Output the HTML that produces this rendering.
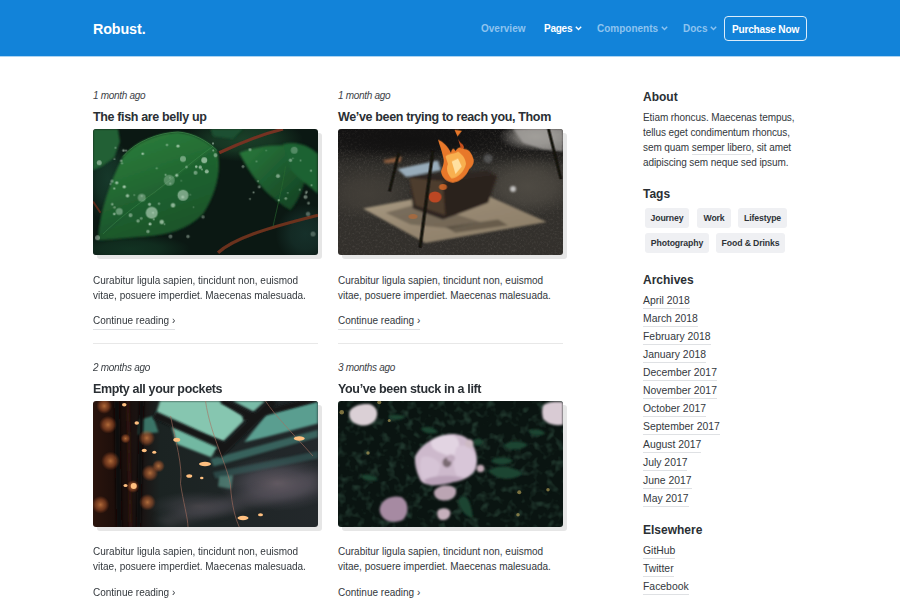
<!DOCTYPE html>
<html><head><meta charset="utf-8">
<style>
*{margin:0;padding:0;box-sizing:border-box}
html,body{width:900px;height:600px;overflow:hidden;background:#fff}
body{font-family:"Liberation Sans",sans-serif;color:#3a3f45;position:relative}
.nav{position:absolute;left:0;top:0;width:900px;height:56px;background:#1283d9;box-shadow:0 1px 0 rgba(18,131,217,.35)}
.brand{position:absolute;left:93px;top:18.5px;font-size:14.3px;letter-spacing:-0.1px;font-weight:bold;color:#fff;line-height:20px}
.nl{position:absolute;top:21.5px;font-size:10px;font-weight:bold;line-height:14px;color:#8ec3ef;white-space:nowrap}
.nl.act{color:#fff}
.chev{display:inline-block;margin-left:2.5px;vertical-align:middle;position:relative;top:-0.5px}
.btn{position:absolute;left:724px;top:16px;width:83px;height:25px;border:1px solid #fff;border-radius:4px;color:#fff;font-size:10.1px;letter-spacing:-0.2px;font-weight:bold;line-height:25.5px;border-color:rgba(255,255,255,.85);text-align:center}
.t{position:absolute;white-space:nowrap}
.date{font-size:10px;letter-spacing:-0.3px;font-style:italic;color:#3d4247;line-height:12px}
.title{font-size:12.5px;font-weight:bold;color:#2a2f34;line-height:14px;letter-spacing:-0.35px}
.para{font-size:10px;color:#33383d;line-height:15px}
.more{font-size:10px;color:#33383d;line-height:12px;border-bottom:1px solid #dfe1e4;padding-bottom:2px}
.hr{position:absolute;height:1px;background:#e8e8e8}
.img{position:absolute;width:225px;height:126px;border-radius:3px;box-shadow:4px 4px 0 #e6e6e6;overflow:hidden}
.img svg{display:block}
.h{font-size:12px;font-weight:bold;color:#2a2f34;line-height:14px}
.side{font-size:10px;letter-spacing:-0.08px;color:#33383d;line-height:15.25px}
.ul{border-bottom:1px solid #dfe1e4;padding-bottom:1px}
.badge{position:absolute;height:19.5px;background:#eff0f3;border-radius:3px;font-size:8.7px;letter-spacing:-0.12px;font-weight:bold;color:#2e3338;line-height:21px;text-align:center}
.arch{font-size:10.4px;color:#33383d;line-height:14px;border-bottom:1px solid #dfe1e4;padding-bottom:0}
</style></head><body>
<div class="nav">
  <div class="brand">Robust.</div>
  <div class="nl" style="left:481px">Overview</div>
  <div class="nl act" style="left:544px;letter-spacing:-0.25px">Pages<svg class="chev" width="7" height="5" viewBox="0 0 7 5"><polyline points="0.8,0.8 3.5,3.6 6.2,0.8" fill="none" stroke="currentColor" stroke-width="1.4"/></svg></div>
  <div class="nl" style="left:597px">Components<svg class="chev" width="7" height="5" viewBox="0 0 7 5"><polyline points="0.8,0.8 3.5,3.6 6.2,0.8" fill="none" stroke="currentColor" stroke-width="1.4"/></svg></div>
  <div class="nl" style="left:683px">Docs<svg class="chev" width="7" height="5" viewBox="0 0 7 5"><polyline points="0.8,0.8 3.5,3.6 6.2,0.8" fill="none" stroke="currentColor" stroke-width="1.4"/></svg></div>
  <div class="btn">Purchase Now</div>
</div>

<!-- row 1 -->
<div class="t date" style="left:93px;top:90px">1 month ago</div>
<div class="t title" style="left:93px;top:109.6px">The fish are belly up</div>
<div class="img" style="left:93px;top:129px" id="img1"><svg width="225" height="126" viewBox="0 0 900 504" preserveAspectRatio="none">
<defs>
<filter id="b1" filterUnits="userSpaceOnUse" x="-100" y="-100" width="1100" height="704"><feGaussianBlur stdDeviation="5"/></filter>
<filter id="b1s" filterUnits="userSpaceOnUse" x="-100" y="-100" width="1100" height="704"><feGaussianBlur stdDeviation="2"/></filter>
<filter id="b1l" filterUnits="userSpaceOnUse" x="-100" y="-100" width="1100" height="704"><feGaussianBlur stdDeviation="25"/></filter>
<linearGradient id="lf1" x1="0.2" y1="0" x2="0.6" y2="1"><stop offset="0" stop-color="#2c7e3d"/><stop offset="0.45" stop-color="#236a32"/><stop offset="1" stop-color="#164628"/></linearGradient>
<linearGradient id="lf2" x1="0" y1="0" x2="1" y2="1"><stop offset="0" stop-color="#2a7a3c"/><stop offset="1" stop-color="#123e22"/></linearGradient>
<radialGradient id="rg1_0"><stop offset="0" stop-color="#1a3f28" stop-opacity="1"/><stop offset="0.5" stop-color="#1a3f28" stop-opacity="0.75"/><stop offset="1" stop-color="#1a3f28" stop-opacity="0"/></radialGradient><radialGradient id="rg1_1"><stop offset="0" stop-color="#16382a" stop-opacity="1"/><stop offset="0.5" stop-color="#16382a" stop-opacity="0.75"/><stop offset="1" stop-color="#16382a" stop-opacity="0"/></radialGradient><radialGradient id="rg1_2"><stop offset="0" stop-color="#16302a" stop-opacity="1"/><stop offset="0.5" stop-color="#16302a" stop-opacity="0.75"/><stop offset="1" stop-color="#16302a" stop-opacity="0"/></radialGradient><radialGradient id="rg1_3"><stop offset="0" stop-color="#123222" stop-opacity="1"/><stop offset="0.5" stop-color="#123222" stop-opacity="0.75"/><stop offset="1" stop-color="#123222" stop-opacity="0"/></radialGradient></defs>
<rect width="900" height="504" fill="#0b1813"/>
<g><ellipse cx="600" cy="40" rx="240" ry="90" fill="url(#rg1_0)"/><ellipse cx="60" cy="200" rx="90" ry="180" fill="url(#rg1_1)"/><ellipse cx="850" cy="420" rx="120" ry="120" fill="url(#rg1_2)"/><ellipse cx="150" cy="480" rx="240" ry="60" fill="url(#rg1_3)"/></g>
<g filter="url(#b1)">
<path d="M0 0 L100 0 L108 50 L85 115 L35 150 L0 165 Z" fill="#226034"/>
<path d="M20 445 C25 330 70 210 120 110 C170 50 260 15 340 12 C400 15 460 50 495 85 C515 150 500 250 440 340 C380 400 300 425 210 430 C140 435 70 445 20 445 Z" fill="url(#lf1)"/>
<path d="M40 430 C120 360 250 260 480 75 C505 150 495 250 440 340 C380 400 300 425 210 430 C140 435 80 440 40 430 Z" fill="#1e5e2e" opacity="0.55"/>
<path d="M585 95 C650 70 740 55 820 72 C870 120 860 240 790 325 C730 290 650 230 585 95 Z" fill="url(#lf2)"/>
<path d="M760 60 C820 45 870 70 900 100 L900 260 C870 230 820 200 790 160 Z" fill="#1f6232"/>
<path d="M470 0 L600 0 L560 40 L480 30 Z" fill="#1b4f30"/>

</g>
<g filter="url(#b1s)">
<path d="M505 95 C580 60 660 25 760 0" stroke="#743222" stroke-width="13" fill="none"/>
<path d="M500 495 C560 440 680 400 900 345" stroke="#6a301f" stroke-width="13" fill="none"/>
<path d="M0 290 L30 335" stroke="#5a2a1c" stroke-width="8" fill="none"/>
<path d="M480 70 C420 110 340 180 250 250 C180 300 100 360 40 420" stroke="#4a9a58" stroke-width="3" fill="none" opacity="0.5"/>
<path d="M770 150 C760 220 740 300 720 390" stroke="#2a6a30" stroke-width="4" fill="none" opacity="0.6"/>
<path d="M120 110 C170 50 260 15 340 12 C400 15 460 50 495 85" stroke="#58b060" stroke-width="3" fill="none" opacity="0.6"/>
</g>
<g fill="#d5ecd9" filter="url(#b1s)">
<circle cx="360" cy="120" r="12" opacity="0.45"/>
<circle cx="445" cy="125" r="12" opacity="0.6"/>
<circle cx="305" cy="205" r="22" opacity="0.3"/>
<circle cx="360" cy="265" r="22" opacity="0.5"/>
<circle cx="235" cy="335" r="24" opacity="0.55"/>
<circle cx="195" cy="275" r="16" opacity="0.35"/>
<circle cx="105" cy="330" r="14" opacity="0.4"/>
<circle cx="275" cy="372" r="9" opacity="0.6"/>
<circle cx="320" cy="305" r="9" opacity="0.6"/>
<circle cx="455" cy="170" r="8" opacity="0.6"/>
<circle cx="410" cy="175" r="8" opacity="0.45"/>
<circle cx="25" cy="135" r="10" opacity="0.5"/>
<circle cx="18" cy="435" r="10" opacity="0.45"/>
<circle cx="740" cy="188" r="8" opacity="0.5"/>
<circle cx="805" cy="85" r="14" opacity="0.3"/>
<circle cx="850" cy="272" r="8" opacity="0.45"/>
<circle cx="380" cy="430" r="7" opacity="0.4"/>
<circle cx="310" cy="430" r="8" opacity="0.35"/>
<circle cx="440" cy="352" r="7" opacity="0.35"/>
<circle cx="490" cy="105" r="8" opacity="0.45"/>
<circle cx="860" cy="340" r="9" opacity="0.35"/>
<circle cx="220" cy="410" r="7" opacity="0.45"/>
<circle cx="180" cy="368" r="7" opacity="0.45"/>
<circle cx="150" cy="345" r="8" opacity="0.45"/>
<circle cx="600" cy="150" r="6" opacity="0.4"/>
<circle cx="790" cy="125" r="7" opacity="0.45"/>
<circle cx="880" cy="420" r="10" opacity="0.3"/><circle cx="199" cy="99" r="5.2" opacity="0.66"/><circle cx="340" cy="68" r="6.3" opacity="0.65"/><circle cx="290" cy="183" r="4.1" opacity="0.50"/><circle cx="85" cy="238" r="4.4" opacity="0.66"/><circle cx="76" cy="209" r="6.8" opacity="0.40"/><circle cx="90" cy="75" r="3.7" opacity="0.43"/><circle cx="243" cy="362" r="3.9" opacity="0.52"/><circle cx="113" cy="127" r="5.4" opacity="0.44"/><circle cx="308" cy="195" r="3.0" opacity="0.50"/><circle cx="480" cy="58" r="4.5" opacity="0.55"/><circle cx="429" cy="153" r="6.8" opacity="0.59"/><circle cx="122" cy="86" r="5.1" opacity="0.57"/><circle cx="193" cy="358" r="5.7" opacity="0.37"/><circle cx="138" cy="267" r="6.6" opacity="0.62"/><circle cx="335" cy="185" r="6.5" opacity="0.63"/><circle cx="296" cy="64" r="4.6" opacity="0.49"/><circle cx="86" cy="120" r="3.4" opacity="0.57"/><circle cx="353" cy="207" r="3.2" opacity="0.37"/><circle cx="195" cy="268" r="3.8" opacity="0.41"/><circle cx="255" cy="157" r="4.4" opacity="0.37"/><circle cx="402" cy="313" r="3.0" opacity="0.40"/><circle cx="165" cy="264" r="3.4" opacity="0.48"/><circle cx="286" cy="381" r="3.1" opacity="0.66"/><circle cx="374" cy="152" r="5.5" opacity="0.40"/><circle cx="481" cy="86" r="4.0" opacity="0.47"/><circle cx="240" cy="335" r="4.5" opacity="0.39"/><circle cx="125" cy="231" r="6.4" opacity="0.70"/><circle cx="77" cy="301" r="4.9" opacity="0.52"/><circle cx="389" cy="263" r="3.3" opacity="0.39"/><circle cx="436" cy="162" r="4.4" opacity="0.44"/><circle cx="359" cy="272" r="6.3" opacity="0.41"/><circle cx="309" cy="218" r="3.1" opacity="0.68"/><circle cx="264" cy="299" r="5.1" opacity="0.40"/><circle cx="86" cy="314" r="5.2" opacity="0.36"/><circle cx="413" cy="151" r="5.1" opacity="0.69"/><circle cx="226" cy="301" r="6.5" opacity="0.59"/><circle cx="70" cy="220" r="4.0" opacity="0.48"/><circle cx="132" cy="86" r="3.7" opacity="0.62"/><circle cx="85" cy="340" r="5.1" opacity="0.62"/><circle cx="116" cy="137" r="4.3" opacity="0.43"/><circle cx="228" cy="380" r="6.2" opacity="0.69"/><circle cx="95" cy="215" r="6.4" opacity="0.63"/><circle cx="827" cy="243" r="3.7" opacity="0.46"/><circle cx="693" cy="86" r="3.1" opacity="0.38"/><circle cx="665" cy="232" r="5.9" opacity="0.43"/><circle cx="862" cy="297" r="5.9" opacity="0.41"/><circle cx="654" cy="130" r="3.6" opacity="0.36"/><circle cx="771" cy="278" r="5.5" opacity="0.44"/><circle cx="779" cy="256" r="3.3" opacity="0.50"/><circle cx="854" cy="252" r="5.3" opacity="0.44"/><circle cx="642" cy="254" r="4.0" opacity="0.54"/><circle cx="872" cy="167" r="4.2" opacity="0.58"/><circle cx="800" cy="117" r="3.4" opacity="0.35"/><circle cx="852" cy="257" r="3.4" opacity="0.55"/><circle cx="874" cy="225" r="4.1" opacity="0.46"/><circle cx="628" cy="83" r="5.9" opacity="0.49"/><circle cx="743" cy="285" r="4.3" opacity="0.56"/><circle cx="830" cy="126" r="3.8" opacity="0.39"/><circle cx="660" cy="209" r="3.8" opacity="0.43"/><circle cx="628" cy="280" r="4.1" opacity="0.44"/>
</g>
</svg></div>
<div class="t para" style="left:93px;top:272.5px">Curabitur ligula sapien, tincidunt non, euismod<br>vitae, posuere imperdiet. Maecenas malesuada.</div>
<div class="t more" style="left:93px;top:314.5px">Continue reading ›</div>
<div class="hr" style="left:93px;top:343px;width:225px"></div>

<div class="t date" style="left:338px;top:90px">1 month ago</div>
<div class="t title" style="left:338px;top:109.6px">We’ve been trying to reach you, Thom</div>
<div class="img" style="left:338px;top:129px" id="img2"><svg width="225" height="126" viewBox="0 0 900 504" preserveAspectRatio="none">
<defs>
<filter id="b2" filterUnits="userSpaceOnUse" x="-100" y="-100" width="1100" height="704"><feGaussianBlur stdDeviation="4"/></filter>
<filter id="b2s" filterUnits="userSpaceOnUse" x="-100" y="-100" width="1100" height="704"><feGaussianBlur stdDeviation="2"/></filter>
<filter id="b2l" filterUnits="userSpaceOnUse" x="-100" y="-100" width="1100" height="704"><feGaussianBlur stdDeviation="30"/></filter>
<filter id="b2n"><feTurbulence type="fractalNoise" baseFrequency="0.12" numOctaves="3" seed="5"/><feColorMatrix values="0 0 0 0 0.1  0 0 0 0 0.09  0 0 0 0 0.08  0 0 0 -2.2 1.2"/></filter>
<linearGradient id="g2" x1="0" y1="0" x2="0" y2="1"><stop offset="0" stop-color="#131212"/><stop offset="0.16" stop-color="#1a1918"/><stop offset="0.3" stop-color="#32302c"/><stop offset="1" stop-color="#33302c"/></linearGradient>
<linearGradient id="mat" x1="0" y1="0" x2="1" y2="1"><stop offset="0" stop-color="#a89a82"/><stop offset="0.5" stop-color="#958670"/><stop offset="1" stop-color="#8a7c66"/></linearGradient>
<radialGradient id="fl" cx="0.5" cy="0.6" r="0.6"><stop offset="0" stop-color="#ffe0a0"/><stop offset="0.5" stop-color="#f6a040"/><stop offset="1" stop-color="#d0561e"/></radialGradient>
<radialGradient id="rg2_0"><stop offset="0" stop-color="#8a8782" stop-opacity="1"/><stop offset="0.5" stop-color="#8a8782" stop-opacity="0.75"/><stop offset="1" stop-color="#8a8782" stop-opacity="0"/></radialGradient><radialGradient id="rg2_1"><stop offset="0" stop-color="#4e4a43" stop-opacity="1"/><stop offset="0.5" stop-color="#4e4a43" stop-opacity="0.75"/><stop offset="1" stop-color="#4e4a43" stop-opacity="0"/></radialGradient><radialGradient id="rg2_2"><stop offset="0" stop-color="#423e38" stop-opacity="1"/><stop offset="0.5" stop-color="#423e38" stop-opacity="0.75"/><stop offset="1" stop-color="#423e38" stop-opacity="0"/></radialGradient><radialGradient id="rg2_3"><stop offset="0" stop-color="#121111" stop-opacity="1"/><stop offset="0.5" stop-color="#121111" stop-opacity="0.75"/><stop offset="1" stop-color="#121111" stop-opacity="0"/></radialGradient></defs>
<rect width="900" height="504" fill="url(#g2)"/>
<rect width="900" height="504" filter="url(#b2n)" opacity="0.45"/>
<g><ellipse cx="790" cy="30" rx="150" ry="60" fill="url(#rg2_0)"/><ellipse cx="760" cy="230" rx="210" ry="120" fill="url(#rg2_1)"/><ellipse cx="120" cy="260" rx="180" ry="105" fill="url(#rg2_2)"/><ellipse cx="300" cy="40" rx="390" ry="75" fill="url(#rg2_3)"/></g>
<g filter="url(#b2)">
<path d="M700 0 L900 0 L900 90 L820 82 L740 55 Z" fill="#a8a5a2" opacity="0.75"/>
<path d="M100 318 L290 282 L610 272 L835 372 L350 456 Z" fill="url(#mat)"/>
<path d="M190 335 L300 305 L420 325 L570 372 L450 398 L290 382 Z" fill="#5a5044" opacity="0.55"/>
<path d="M430 392 L640 362 L680 385 L470 415 Z" fill="#3e352c" opacity="0.5"/>
<path d="M285 185 L600 168 L636 190 L600 295 L420 362 L300 318 Z" fill="#2e2520"/>
<path d="M285 195 L440 210 L430 345 L310 305 Z" fill="#4e3c2e"/>
<path d="M420 215 L630 185 L600 290 L430 355 Z" fill="#2a201b"/>
<path d="M238 160 L400 126 L412 165 L272 192 Z" fill="#98acba"/>
<circle cx="700" cy="240" r="12" fill="#e0e0e0" opacity="0.8"/>
<circle cx="600" cy="118" r="18" fill="#7a7c80" opacity="0.5"/>
<path d="M180 125 L255 110 L250 132 L190 137 Z" fill="#a86c44" opacity="0.8"/>
</g>
<g filter="url(#b2s)">
<path d="M400 42 C420 50 440 70 452 95 C455 80 462 72 470 88 C478 72 495 68 505 80 C520 78 535 95 540 115 C548 130 540 150 525 160 C512 190 490 210 460 215 C435 212 415 195 412 170 C418 150 428 135 420 110 C415 85 405 62 400 42 Z" fill="#e8782a"/>
<path d="M430 110 C445 95 470 100 480 90 C495 100 510 115 512 140 C505 170 480 195 455 198 C440 185 430 160 440 140 Z" fill="#f8b050"/>
<path d="M455 130 L480 118 L495 150 L470 180 Z" fill="#ffe0a0"/>
<path d="M466 3 L496 7 L478 30 Z" fill="#e8782a"/>
<path d="M480 40 C490 60 500 55 505 75 L492 78 Z" fill="#c8501c"/>
<ellipse cx="388" cy="272" rx="26" ry="22" fill="#d84a22" opacity="0.8"/>
<ellipse cx="420" cy="232" rx="16" ry="12" fill="#ea7028" opacity="0.75"/>
<ellipse cx="300" cy="350" rx="18" ry="10" fill="#c06a30" opacity="0.6"/>
</g>
<g stroke="#141211" fill="none" filter="url(#b2s)">
<path d="M380 85 L328 475" stroke-width="13"/>
<path d="M243 95 L206 250" stroke-width="12"/>
<path d="M842 0 L892 200" stroke-width="12"/>
</g>
</svg></div>
<div class="t para" style="left:338px;top:272.5px">Curabitur ligula sapien, tincidunt non, euismod<br>vitae, posuere imperdiet. Maecenas malesuada.</div>
<div class="t more" style="left:338px;top:314.5px">Continue reading ›</div>
<div class="hr" style="left:338px;top:343px;width:225px"></div>

<!-- row 2 -->
<div class="t date" style="left:93px;top:362px">2 months ago</div>
<div class="t title" style="left:93px;top:381.6px">Empty all your pockets</div>
<div class="img" style="left:93px;top:401px" id="img3"><svg width="225" height="126" viewBox="0 0 900 504" preserveAspectRatio="none">
<defs>
<filter id="b3" filterUnits="userSpaceOnUse" x="-100" y="-100" width="1100" height="704"><feGaussianBlur stdDeviation="5"/></filter>
<filter id="b3s" filterUnits="userSpaceOnUse" x="-100" y="-100" width="1100" height="704"><feGaussianBlur stdDeviation="2.5"/></filter>
<filter id="b3k" filterUnits="userSpaceOnUse" x="-100" y="-100" width="1100" height="704"><feGaussianBlur stdDeviation="14"/></filter>
<linearGradient id="g3" x1="0" y1="0" x2="1" y2="0"><stop offset="0" stop-color="#2a140d"/><stop offset="0.12" stop-color="#1a0d0a"/><stop offset="0.22" stop-color="#1a1413"/><stop offset="0.3" stop-color="#1b2322"/><stop offset="1" stop-color="#23282b"/></linearGradient>
<radialGradient id="haze3"><stop offset="0" stop-color="#6a6068" stop-opacity="0.9"/><stop offset="0.5" stop-color="#5a5560" stop-opacity="0.6"/><stop offset="1" stop-color="#4a4850" stop-opacity="0"/></radialGradient>
<radialGradient id="glow3"><stop offset="0" stop-color="#e08848" stop-opacity="0.75"/><stop offset="0.6" stop-color="#c06030" stop-opacity="0.45"/><stop offset="1" stop-color="#a04820" stop-opacity="0"/></radialGradient>
</defs>
<rect width="900" height="504" fill="url(#g3)"/>
<ellipse cx="740" cy="330" rx="240" ry="110" fill="url(#haze3)"/><path d="M250 470 L900 280 L900 360 L300 504 Z" fill="#5e5862" opacity="0.35" filter="url(#b3k)"/>
<ellipse cx="420" cy="420" rx="200" ry="60" fill="url(#haze3)" opacity="0.5"/>
<g filter="url(#b3)">
<path d="M268 0 L505 0 L612 70 L522 160 L300 88 L250 58 Z" fill="#86c6b0"/>
<path d="M560 0 L688 0 L642 42 Z" fill="#79bca8"/>
<path d="M695 52 L900 0 L900 90 L700 142 L605 165 Z" fill="#5a9e90"/>
<path d="M315 100 L508 168 L472 225 L335 172 Z" fill="#72b8a2"/>
<path d="M470 232 L900 115 L900 145 L482 262 Z" fill="#4a8a80" opacity="0.6"/>
<path d="M185 75 L240 60 L262 125 L180 135 Z" fill="#4a9a88" opacity="0.7"/>
<path d="M505 300 L560 298 L552 352 L500 342 Z" fill="#6ab0a0" opacity="0.55"/>
<path d="M480 285 L900 200 L900 230 L490 310 Z" fill="#3a6a66" opacity="0.5"/>
</g>
<g stroke="#141919" fill="none" filter="url(#b3)">
<path d="M245 55 L525 182" stroke-width="30"/>
<path d="M725 0 L500 215" stroke-width="32"/>
<path d="M515 0 L640 62" stroke-width="20"/>
<path d="M600 70 L900 -10" stroke-width="22"/>
</g>
<g stroke="#0e0808" fill="none" filter="url(#b3)">
<path d="M195 0 L182 504" stroke-width="18"/>
<path d="M95 0 L105 504" stroke-width="22"/>
<path d="M140 0 L150 504" stroke-width="8" stroke="#3a1a10"/>
</g>
<g stroke="#a87060" fill="none" stroke-width="3" filter="url(#b3s)" opacity="0.8">
<path d="M310 60 C330 160 360 260 350 330 C360 400 380 470 380 504"/>
<path d="M450 0 C470 140 540 260 550 340 C555 420 570 470 585 504"/>
<path d="M690 0 C730 60 790 120 880 220"/>
</g>
<g fill="url(#glow3)">
<circle cx="45" cy="20" r="32"/>
<circle cx="60" cy="95" r="36"/>
<circle cx="215" cy="148" r="34"/>
<circle cx="70" cy="240" r="38"/>
<circle cx="228" cy="288" r="34"/>
<circle cx="262" cy="260" r="26"/>
<circle cx="30" cy="415" r="36"/>
<circle cx="218" cy="405" r="34"/>
<circle cx="130" cy="150" r="20"/>
<circle cx="160" cy="342" r="26"/>
</g>
<g fill="#ffc080" filter="url(#b3s)">
<ellipse cx="125" cy="15" rx="9" ry="7"/>
<ellipse cx="175" cy="88" rx="9" ry="7"/>
<ellipse cx="205" cy="198" rx="10" ry="7"/>
<ellipse cx="245" cy="205" rx="8" ry="6"/>
<ellipse cx="163" cy="340" rx="12" ry="12"/>
<ellipse cx="130" cy="338" rx="8" ry="6"/>
<ellipse cx="335" cy="155" rx="14" ry="8"/>
<ellipse cx="448" cy="252" rx="24" ry="9"/>
<ellipse cx="385" cy="300" rx="12" ry="7"/>
<ellipse cx="825" cy="150" rx="22" ry="9"/>
<ellipse cx="600" cy="468" rx="22" ry="9"/>
<ellipse cx="670" cy="455" rx="10" ry="6"/>
<ellipse cx="435" cy="308" rx="7" ry="5"/>
</g>
</svg></div>
<div class="t para" style="left:93px;top:544.4px">Curabitur ligula sapien, tincidunt non, euismod<br>vitae, posuere imperdiet. Maecenas malesuada.</div>
<div class="t more" style="left:93px;top:586.5px">Continue reading ›</div>

<div class="t date" style="left:338px;top:362px">3 months ago</div>
<div class="t title" style="left:338px;top:381.6px">You’ve been stuck in a lift</div>
<div class="img" style="left:338px;top:401px" id="img4"><svg width="225" height="126" viewBox="0 0 900 504" preserveAspectRatio="none">
<defs>
<filter id="b4" filterUnits="userSpaceOnUse" x="-100" y="-100" width="1100" height="704"><feGaussianBlur stdDeviation="4"/></filter>
<filter id="b4s" filterUnits="userSpaceOnUse" x="-100" y="-100" width="1100" height="704"><feGaussianBlur stdDeviation="2"/></filter>
<filter id="b4l" filterUnits="userSpaceOnUse" x="-100" y="-100" width="1100" height="704"><feGaussianBlur stdDeviation="30"/></filter>
<filter id="b4n" x="0" y="0" width="100%" height="100%"><feTurbulence type="fractalNoise" baseFrequency="0.03" numOctaves="2" seed="11"/><feColorMatrix values="0 0 0 0 0.08  0 0 0 0 0.22  0 0 0 0 0.14  0 0 0 3 -1.45"/><feGaussianBlur stdDeviation="3"/></filter>
<radialGradient id="rose" cx="0.5" cy="0.45" r="0.55"><stop offset="0" stop-color="#3a3034"/><stop offset="0.14" stop-color="#a892a4"/><stop offset="0.35" stop-color="#d9c8d8"/><stop offset="0.8" stop-color="#d2bfd0"/><stop offset="1" stop-color="#b9a3b7"/></radialGradient>
</defs>
<rect width="900" height="504" fill="#0a1411"/>
<rect width="900" height="504" filter="url(#b4n)" opacity="0.32"/>

<g filter="url(#b4)" fill="#1f4432">
<path d="M600 280 C640 250 700 260 740 290 C700 320 640 320 600 280 Z"/>
<path d="M660 180 C690 150 740 160 760 175 C730 200 690 200 660 180 Z"/>
<path d="M610 240 C640 215 690 225 700 240 C670 260 640 260 610 240 Z"/>
<path d="M480 400 C500 360 530 380 540 470 C510 460 490 440 480 400 Z"/>
<path d="M200 60 C230 50 260 55 270 65 C240 80 220 80 200 60 Z"/>
<path d="M540 160 C560 140 580 150 580 170 C560 185 545 180 540 160 Z"/>
<path d="M330 110 C360 95 390 110 400 125 C370 135 345 130 330 110 Z"/>
<path d="M760 120 C790 105 820 115 830 130 C800 145 775 140 760 120 Z"/>
<path d="M90 300 C120 285 150 300 160 315 C130 325 105 320 90 300 Z"/>
</g>
<g filter="url(#b4)">
<g transform="translate(436 236) scale(1.0) translate(-432 -240)"><path d="M305 225 C320 190 370 150 420 140 C460 130 500 140 520 160 C550 190 560 240 545 280 C520 320 470 330 420 330 C380 340 340 345 325 320 C310 290 300 250 305 225 Z" fill="#cdb9cc"/>
<path d="M370 160 C400 140 450 135 470 150 C490 175 480 210 460 230 C430 220 400 210 385 200 C370 190 365 175 370 160 Z" fill="#e2d4e2"/>
<path d="M330 230 C350 220 390 230 405 260 C400 300 380 330 350 335 C330 320 315 280 330 230 Z" fill="#d6c4d6"/>
<path d="M470 190 C500 170 540 190 548 240 C545 280 520 310 480 315 C460 290 450 250 470 190 Z" fill="#d8c6d8"/>
<path d="M340 320 C380 300 440 300 500 310 C470 330 420 340 370 342 C355 340 345 332 340 320 Z" fill="#b9a2b8"/>
<ellipse cx="432" cy="250" rx="18" ry="20" fill="#7a6a72"/>
<ellipse cx="448" cy="232" rx="16" ry="14" fill="#c0aabd"/></g>
<path d="M385 360 C400 335 450 330 470 350 C480 375 460 400 420 398 C395 395 380 380 385 360 Z" fill="#bba5b3"/>
<path d="M398 440 C410 425 445 425 450 445 C450 470 430 480 410 475 C398 468 395 455 398 440 Z" fill="#c6b0bc"/>
<path d="M170 420 C180 390 220 375 255 385 C285 405 285 450 260 475 C230 490 190 485 175 460 C165 445 165 430 170 420 Z" fill="#a68aa2"/>
<path d="M45 45 C55 20 90 10 125 12 C155 20 165 50 150 75 C135 95 110 100 95 98 C70 95 40 80 45 45 Z" fill="#dbd0d6"/>
<path d="M820 20 C830 5 870 0 900 5 L900 95 C870 100 840 95 820 70 C815 50 815 35 820 20 Z" fill="#d9cbd4"/>
<circle cx="570" cy="270" r="15" fill="#c4acb8"/>
<circle cx="525" cy="170" r="17" fill="#cdbac4"/>
</g>

<g fill="#c8b060" filter="url(#b4s)" opacity="0.6">
<circle cx="15" cy="45" r="9"/><circle cx="205" cy="78" r="6"/><circle cx="120" cy="208" r="7"/>
<circle cx="725" cy="365" r="8"/><circle cx="840" cy="355" r="7"/><circle cx="720" cy="455" r="7"/><circle cx="165" cy="5" r="8"/>
</g>
</svg></div>
<div class="t para" style="left:338px;top:544.4px">Curabitur ligula sapien, tincidunt non, euismod<br>vitae, posuere imperdiet. Maecenas malesuada.</div>
<div class="t more" style="left:338px;top:586.5px">Continue reading ›</div>

<!-- sidebar -->
<div class="t h" style="left:643px;top:89.5px">About</div>
<div class="t side" style="left:643px;top:109.7px">Etiam rhoncus. Maecenas tempus,<br>tellus eget condimentum rhoncus,<br>sem quam <span class="ul">semper libero</span>, sit amet<br>adipiscing sem neque sed ipsum.</div>
<div class="t h" style="left:643px;top:187px">Tags</div>
<div class="badge" style="left:645px;top:208px;width:44px">Journey</div>
<div class="badge" style="left:697px;top:208px;width:34px">Work</div>
<div class="badge" style="left:738px;top:208px;width:49px">Lifestype</div>
<div class="badge" style="left:645px;top:233px;width:64px">Photography</div>
<div class="badge" style="left:716px;top:233px;width:69px">Food &amp; Drinks</div>
<div class="t h" style="left:643px;top:273px">Archives</div>
<div class="t arch" style="left:643px;top:294px">April 2018</div>
<div class="t arch" style="left:643px;top:312px">March 2018</div>
<div class="t arch" style="left:643px;top:330px">February 2018</div>
<div class="t arch" style="left:643px;top:348px">January 2018</div>
<div class="t arch" style="left:643px;top:366px">December 2017</div>
<div class="t arch" style="left:643px;top:384px">November 2017</div>
<div class="t arch" style="left:643px;top:402px">October 2017</div>
<div class="t arch" style="left:643px;top:420px">September 2017</div>
<div class="t arch" style="left:643px;top:438px">August 2017</div>
<div class="t arch" style="left:643px;top:456px">July 2017</div>
<div class="t arch" style="left:643px;top:474px">June 2017</div>
<div class="t arch" style="left:643px;top:492px">May 2017</div>
<div class="t h" style="left:643px;top:522.5px">Elsewhere</div>
<div class="t arch" style="left:643px;top:544px">GitHub</div>
<div class="t arch" style="left:643px;top:562px">Twitter</div>
<div class="t arch" style="left:643px;top:580px">Facebook</div>
</body></html>
